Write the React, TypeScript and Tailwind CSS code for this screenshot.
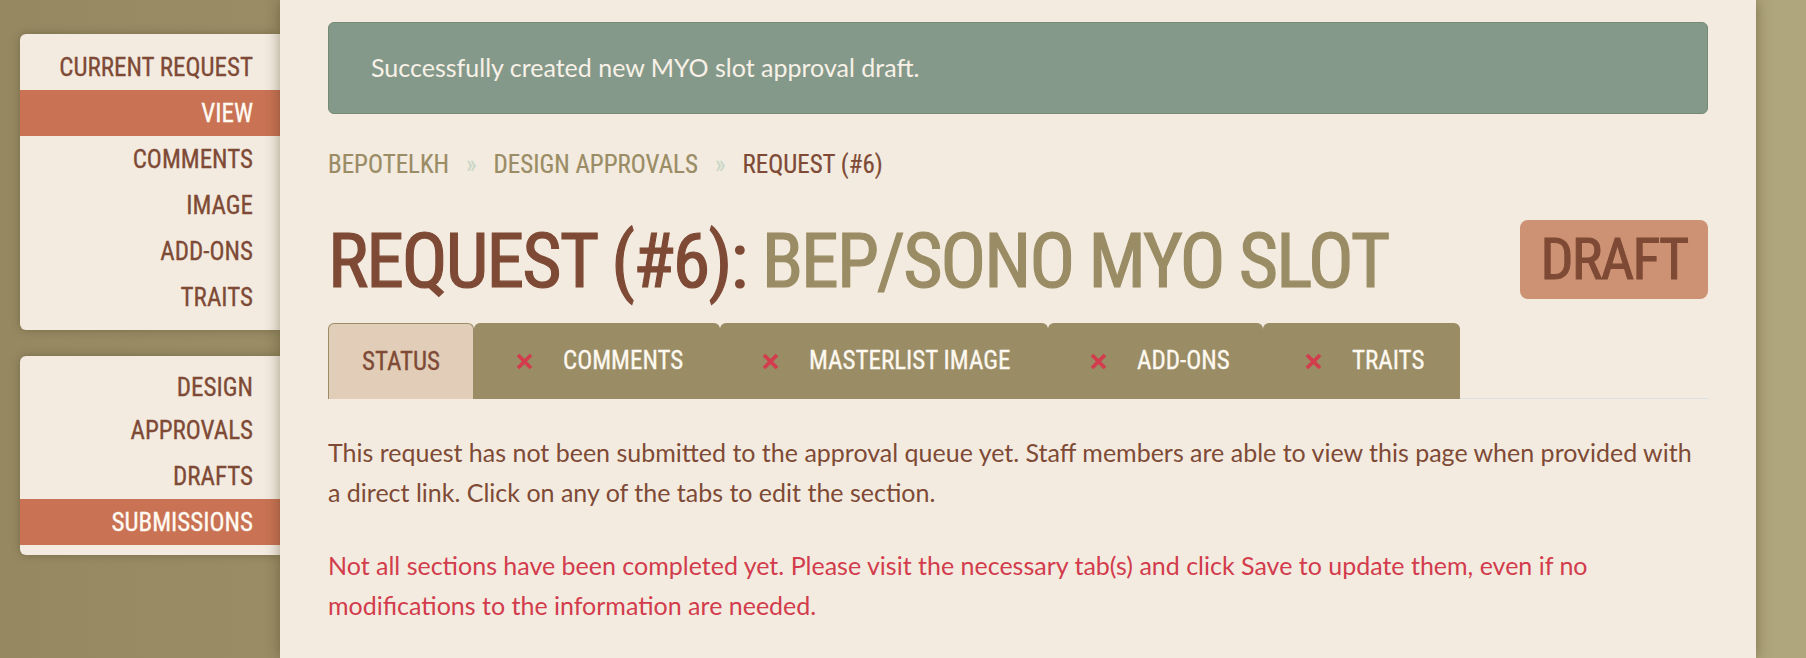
const condensed = 'font-[family-name:Roboto_Condensed,Liberation_Sans_Narrow,Roboto,sans-serif]'
const lato = 'font-[family-name:Lato,Noto_Sans,sans-serif]'

interface SideItem {
  label: string
  header?: boolean
  active?: boolean
}

const currentRequest: SideItem[] = [
  { label: 'CURRENT REQUEST', header: true },
  { label: 'VIEW', active: true },
  { label: 'COMMENTS' },
  { label: 'IMAGE' },
  { label: 'ADD-ONS' },
  { label: 'TRAITS' }
]

const approvals: SideItem[] = [
  { label: 'DRAFTS' },
  { label: 'SUBMISSIONS', active: true }
]

const SideRow = ({ item }: { item: SideItem }) => (
  <div
    className={`h-[46px] flex items-center justify-end pr-[27px] text-[25px] leading-none [-webkit-text-stroke:0.3px] ${
      item.active ? 'bg-[#c97254] text-[#fffaf2]' : 'text-[#7e4a35]'
    }`}>
    {item.label}
  </div>
)

// thick red cross used on the incomplete tabs
const Cross = () => (
  <svg viewBox="0 0 17 17" className="w-[17px] h-[17px] shrink-0" fill="none">
    <path d="M2 2 L15 15 M15 2 L2 15" stroke="#d23c4c" strokeWidth="3.8" />
  </svg>
)

const tabs = [
  { label: 'COMMENTS', width: 'w-[246px]' },
  { label: 'MASTERLIST IMAGE', width: 'w-[328px]' },
  { label: 'ADD-ONS', width: 'w-[215px]' },
  { label: 'TRAITS', width: 'w-[197px]' }
]

export default function App() {
  return (
    <div className={`min-h-[658px] w-full flex bg-gradient-to-r from-[#968962] to-[#b0a67d] ${condensed}`}>
      {/* sidebar */}
      <aside className="w-[280px] shrink-0 pt-[34px] pl-[20px] flex flex-col gap-[26px]">
        <div className="bg-[#f3ebe0] rounded-l-[6px] py-[10px] shadow-[0_0_10px_rgba(60,50,20,0.35)]">
          {currentRequest.map(item => (
            <SideRow key={item.label} item={item} />
          ))}
        </div>
        <div className="bg-[#f3ebe0] rounded-l-[6px] py-[10px] shadow-[0_0_10px_rgba(60,50,20,0.35)]">
          <div className="text-right pr-[27px] pb-[1px] text-[25px] leading-[43px] text-[#7e4a35] [-webkit-text-stroke:0.3px]">
            <div>DESIGN</div>
            <div>APPROVALS</div>
          </div>
          {approvals.map(item => (
            <SideRow key={item.label} item={item} />
          ))}
        </div>
      </aside>

      {/* main panel */}
      <main className="relative z-10 w-[1476px] shrink-0 min-h-[658px] bg-[#f3ebe0] px-[48px] pt-[22px] shadow-[0_0_14px_rgba(60,50,20,0.45)]">
        <div className={`h-[92px] flex items-center pl-[42px] rounded-[6px] border border-[#738a75] bg-[#85998a] text-[#f8f1e7] text-[25px] ${lato}`}>
          Successfully created new MYO slot approval draft.
        </div>

        <nav className="mt-[37px] flex items-center h-[28px] text-[25px] leading-[28px] [-webkit-text-stroke:0.2px]">
          <span className="text-[#9a8c64]">BEPOTELKH</span>
          <span className="mx-[17px] text-[#c9d8c6]">»</span>
          <span className="text-[#9a8c64]">DESIGN APPROVALS</span>
          <span className="mx-[17px] text-[#c9d8c6]">»</span>
          <span className="text-[#7e4a35]">REQUEST (#6)</span>
        </nav>

        <div className="mt-[41px] flex items-start justify-between">
          <h1 className="text-[76px] leading-[83px] font-normal tracking-[-2px] [-webkit-text-stroke:1.2px]">
            <span className="text-[#7e4a35]">REQUEST (#6):</span>{' '}
            <span className="text-[#9a8c64]">BEP/SONO MYO SLOT</span>
          </h1>
          <div className="h-[79px] w-[188px] flex items-center justify-center rounded-[8px] bg-[#cc9273] text-[#7e4a35] text-[58px] leading-[79px] tracking-[-1.8px] [-webkit-text-stroke:1px]">
            DRAFT
          </div>
        </div>

        <div className="mt-[20px] flex border-b border-[#dbe0e3]">
          <div className="-mb-px w-[146px] h-[76px] flex items-center justify-center rounded-t-[6px] border-[1.5px] border-b-0 border-[#9a8c64] bg-[#e2cdb8] text-[#7e4a35] text-[25px] [-webkit-text-stroke:0.3px]">
            STATUS
          </div>
          {tabs.map(tab => (
            <div
              key={tab.label}
              className={`-mb-px ${tab.width} h-[76px] flex items-center pl-[42px] gap-[30px] rounded-t-[6px] bg-[#9a8c64] text-[#fdf8f0] text-[25px] [-webkit-text-stroke:0.3px]`}>
              <Cross />
              <span>{tab.label}</span>
            </div>
          ))}
        </div>

        <div className={`pt-[34px] text-[25px] leading-[39.5px] ${lato}`}>
          <p className="text-[#7e4a35] mb-[34px]">
            This request has not been submitted to the approval queue yet. Staff members are able to view this page when provided with a direct link. Click on any of the tabs to edit the section.
          </p>
          <p className="text-[#d23c4c]">
            Not all sections have been completed yet. Please visit the necessary tab(s) and click Save to update them, even if no modifications to the information are needed.
          </p>
        </div>
      </main>
    </div>
  )
}
